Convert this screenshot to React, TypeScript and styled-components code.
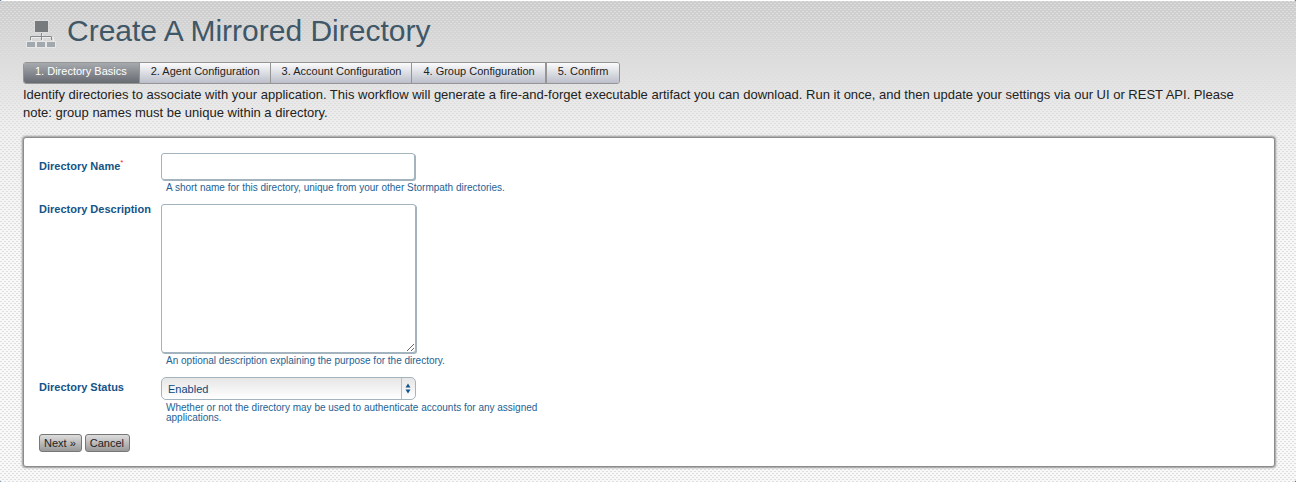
import React from "react";
import styled, { createGlobalStyle } from "styled-components";

const GlobalStyle = createGlobalStyle`
  *, *::before, *::after { box-sizing: border-box; }
  html { min-height: 100%; background: #1d4263; }
  body {
    margin: 0;
    font-family: "Liberation Sans", Arial, sans-serif;
    color: #222;
  }
`;

const Page = styled.main`
  min-height: 100vh;
  padding: 10px 21px 14px 23px;
  border-top: 1px solid #fff;
  border-radius: 2px;
  background:
    conic-gradient(at 2px 1px, transparent 75%, #dedede 0) 0 0 / 4px 4px,
    conic-gradient(at 2px 1px, transparent 75%, #dedede 0) 2px 2px / 4px 4px,
    linear-gradient(#cccccc 0, #f0f0f0 130px, #f9f9f9 260px);
`;

const Header = styled.header`
  display: flex;
  align-items: center;
  gap: 8px;
  height: 40px;
  padding-left: 3px;
`;

const Logo = styled.svg`
  flex: none;
  margin-top: 8px;
`;

const Title = styled.h1`
  margin: 0;
  font-size: 30px;
  line-height: 36px;
  font-weight: 400;
  color: #3f5767;
`;

const Steps = styled.ol`
  display: flex;
  width: fit-content;
  margin: 11px 0 0;
  padding: 0;
  list-style: none;
  border: 1px solid #959595;
  border-radius: 3px;
  overflow: hidden;
`;

const Step = styled.li<{ $active?: boolean }>`
  height: 20px;
  padding: 0 ${(p) => (p.$active ? 12 : 10)}px 0 11px;
  font-size: 11px;
  line-height: 17px;
  color: ${(p) => (p.$active ? "#fff" : "#222")};
  background: ${(p) =>
    p.$active ? "linear-gradient(#a6a9ad, #676b72)" : "linear-gradient(#fbfbfc, #bcbfca)"};
  & + & { border-left: 1px solid #959595; }
  &:last-child { border-left-width: 2px; padding-right: 11px; }
`;

const Intro = styled.p`
  margin: 2px 0 15px;
  padding-right: 24px;
  font-size: 13px;
  line-height: 18px;
`;

const Form = styled.form`
  padding: 15px 15px 14px;
  border: 1px solid #8c8c8c;
  border-radius: 3px;
  background: #fff;
  box-shadow: 0 0 2px 1px #999;
`;

const Field = styled.div`
  display: grid;
  grid-template-columns: 122px minmax(0, 410px);
  margin-bottom: 11px;
`;

const Label = styled.label<{ $top: number }>`
  padding-top: ${(p) => p.$top}px;
  font-size: 11px;
  line-height: 10px;
  font-weight: 700;
  color: #135487;
`;

const Required = styled.sup`
  font-size: 8px;
  line-height: 0;
  font-weight: 400;
  color: #f22;
`;

const Hint = styled.p`
  margin: 3px 0 0 5px;
  font-size: 10px;
  line-height: 10px;
  color: #1d6294;
`;

const TextInput = styled.input`
  display: block;
  width: 254px;
  height: 27px;
  border: 1px solid #a3b4bf;
  border-radius: 3px;
  background: #fff;
  box-shadow: 1px 1px 0 #a3b4bf;
  outline: none;
`;

const TextArea = styled.textarea`
  display: block;
  width: 255px;
  height: 149px;
  border: 1px solid #a3b4bf;
  border-radius: 3px;
  background: #fff;
  box-shadow: 1px 1px 0 #a3b4bf;
  outline: none;
`;

const SelectWrap = styled.div`
  position: relative;
  width: 255px;
`;

const Select = styled.select`
  display: block;
  appearance: none;
  width: 100%;
  height: 23px;
  padding: 0 20px 0 6px;
  border: 1px solid #a3b4bf;
  border-radius: 5px;
  background: linear-gradient(#e6e6e6, #fff);
  font: 11px "Liberation Sans", Arial, sans-serif;
  color: #0d477d;
`;

const Arrows = styled.svg`
  position: absolute;
  top: 1px;
  right: 1px;
  pointer-events: none;
`;

const Actions = styled.div`
  display: flex;
  gap: 3px;
`;

const Button = styled.button`
  height: 18px;
  padding: 0 5px 0 4px;
  border: 1px solid #777;
  border-radius: 3px;
  background: linear-gradient(#ddd, #999);
  font: 11px "Liberation Sans", Arial, sans-serif;
  color: #222;
`;

const steps = [
  "1. Directory Basics",
  "2. Agent Configuration",
  "3. Account Configuration",
  "4. Group Configuration",
  "5. Confirm",
];

const DirectoryIcon = () => (
  <Logo width="33" height="30" viewBox="0 0 33 30" aria-hidden="true">
    <path d="M5.5 21v-3.500h22V21M16.500 14v7" fill="none" stroke="#eee" />
    <rect x="8.500" y="0.500" width="14" height="12" fill="#777b7e" stroke="#ddd" />
    <path d="M15.500 13v7M4.500 20v-3.500h21V20" fill="none" stroke="#858a8e" />
    {[1, 11, 21].map((x) => (
      <rect key={x} x={x - 0.5} y="21.500" width="9" height="6" fill="#a1a8ae" stroke="#e6e6e6" />
    ))}
  </Logo>
);

export default function App() {
  return (
    <>
      <GlobalStyle />
      <Page>
        <Header>
          <DirectoryIcon />
          <Title>Create A Mirrored Directory</Title>
        </Header>
        <Steps>
          {steps.map((s, i) => (
            <Step key={s} $active={i === 0}>{s}</Step>
          ))}
        </Steps>
        <Intro>
          Identify directories to associate with your application. This workflow will generate a
          fire-and-forget executable artifact you can download. Run it once, and then update your
          settings via our UI or REST API. Please note: group names must be unique within a directory.
        </Intro>
        <Form onSubmit={(e) => e.preventDefault()}>
          <Field>
            <Label htmlFor="name" $top={8}>Directory Name<Required>*</Required></Label>
            <div>
              <TextInput id="name" type="text" />
              <Hint>A short name for this directory, unique from your other Stormpath directories.</Hint>
            </div>
          </Field>
          <Field>
            <Label htmlFor="description" $top={0}>Directory Description</Label>
            <div>
              <TextArea id="description" />
              <Hint>An optional description explaining the purpose for the directory.</Hint>
            </div>
          </Field>
          <Field>
            <Label htmlFor="status" $top={5}>Directory Status</Label>
            <div>
              <SelectWrap>
                <Select id="status" defaultValue="Enabled">
                  <option>Enabled</option>
                  <option>Disabled</option>
                </Select>
                <Arrows width="14" height="21" viewBox="0 0 14 21" aria-hidden="true">
                  <path d="M0.500 0v21" stroke="#b5bfc6" />
                  <path d="M4.500 9.500l2.500-4 2.500 4zM4.500 11.500l2.500 4 2.500-4z" fill="#14548a" />
                </Arrows>
              </SelectWrap>
              <Hint>Whether or not the directory may be used to authenticate accounts for any assigned applications.</Hint>
            </div>
          </Field>
          <Actions>
            <Button type="submit">Next »</Button>
            <Button type="button">Cancel</Button>
          </Actions>
        </Form>
      </Page>
    </>
  );
}
